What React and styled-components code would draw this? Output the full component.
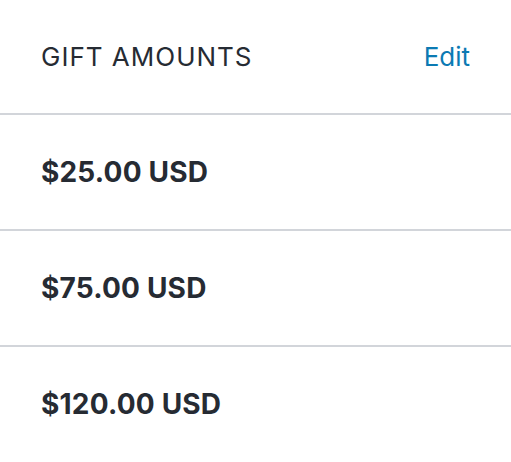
import React from "react";
import styled, { createGlobalStyle } from "styled-components";

const GlobalStyle = createGlobalStyle`
  html, body {
    margin: 0;
    padding: 0;
    background: #ffffff;
  }
  body {
    font-family: Inter, "Open Sans", sans-serif;
  }
`;

const Panel = styled.section`
  width: 511px;
`;

const Header = styled.div`
  display: flex;
  align-items: center;
  justify-content: space-between;
  height: 113px;
  padding: 0 41px;
  box-sizing: border-box;
`;

const Title = styled.h2`
  margin: 0;
  font-family: Inter, sans-serif;
  font-size: 26px;
  font-weight: 400;
  letter-spacing: 1px;
  color: #262b33;
`;

const EditLink = styled.a`
  font-family: Inter, sans-serif;
  font-size: 26px;
  font-weight: 400;
  color: #0b7ab3;
  text-decoration: none;
  cursor: pointer;
`;

const Row = styled.div`
  display: flex;
  align-items: center;
  height: 116px;
  padding: 0 41px;
  box-sizing: border-box;
  border-top: 2px solid #d2d5da;
`;

const Amount = styled.span`
  font-family: Inter, sans-serif;
  font-size: 28px;
  font-weight: 700;
  letter-spacing: 0.2px;
  color: #262b33;
`;

const amounts = ["$25.00 USD", "$75.00 USD", "$120.00 USD"];

export default function App() {
  return (
    <>
      <GlobalStyle />
      <Panel>
        <Header>
          <Title>GIFT AMOUNTS</Title>
          <EditLink>Edit</EditLink>
        </Header>
        {amounts.map((a) => (
          <Row key={a}>
            <Amount>{a}</Amount>
          </Row>
        ))}
      </Panel>
    </>
  );
}
